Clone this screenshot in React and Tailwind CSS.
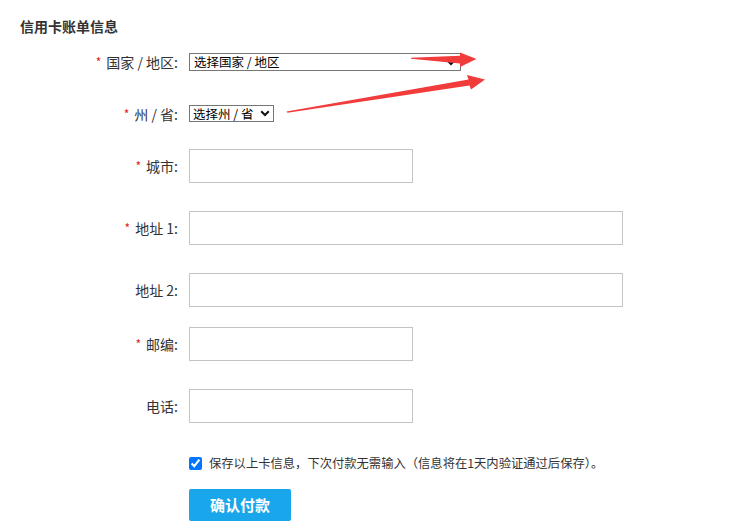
import React from "react";

function Label({ required, children }) {
  return (
    <div className="w-[178px] shrink-0 text-right text-[14px] leading-[20px] text-[#333]">
      {required && <span className="text-[#e02020] text-[12px] mr-[5px] align-[1px]">*</span>}
      {children}
    </div>
  );
}

function Row({ className, required, label, children }) {
  return (
    <div className={"flex items-center gap-[11px] " + className}>
      <Label required={required}>{label}</Label>
      {children}
    </div>
  );
}

function Chevron({ className }) {
  return (
    <svg className={className} width="10" height="7" viewBox="0 0 10 7">
      <path d="M1.2 1.3 L5 5 L8.8 1.3" fill="none" stroke="#111" strokeWidth="2" />
    </svg>
  );
}

export default function App() {
  return (
    <div
      className="relative w-[755px] h-[531px] bg-white overflow-hidden"
      style={{ fontFamily: '"Noto Sans CJK SC", "Liberation Sans", sans-serif' }}
    >
      <div className="pl-[20px] pt-[16px] text-[14px] leading-[20px] font-bold text-[#333]">
        信用卡账单信息
      </div>

      <Row className="mt-[17px] h-[18px]" required label="国家 / 地区:">
        <div className="relative w-[272px] h-[18px]">
          <select className="block appearance-none w-full h-full border border-[#767676] text-[12.5px] leading-[16px] text-black pl-[4px] py-0 bg-white">
            <option>选择国家 / 地区</option>
          </select>
          <Chevron className="absolute right-[5px] top-[6px] pointer-events-none" />
        </div>
      </Row>

      <Row className="mt-[34px] h-[17px]" required label="州 / 省:">
        <div className="relative w-[85px] h-[17px]">
          <select className="block appearance-none w-full h-full border border-[#767676] text-[12.5px] leading-[15px] text-black pl-[3px] py-0 bg-white">
            <option>选择州 / 省</option>
          </select>
          <Chevron className="absolute right-[4px] top-[5px] pointer-events-none" />
        </div>
      </Row>

      <Row className="mt-[27px] h-[34px]" required label="城市:">
        <input className="w-[224px] h-[34px] border border-[#c4c4c4] bg-white" />
      </Row>

      <Row className="mt-[28px] h-[34px]" required label="地址 1:">
        <input className="w-[434px] h-[34px] border border-[#c4c4c4] bg-white" />
      </Row>

      <Row className="mt-[28px] h-[34px]" label="地址 2:">
        <input className="w-[434px] h-[34px] border border-[#c4c4c4] bg-white" />
      </Row>

      <Row className="mt-[20px] h-[34px]" required label="邮编:">
        <input className="w-[224px] h-[34px] border border-[#c4c4c4] bg-white" />
      </Row>

      <Row className="mt-[28px] h-[34px]" label="电话:">
        <input className="w-[224px] h-[34px] border border-[#c4c4c4] bg-white" />
      </Row>

      <div className="mt-[30px] h-[20px] pl-[189px] flex items-center gap-[7px]">
        <input type="checkbox" defaultChecked className="w-[13px] h-[13px] m-0 accent-[#0075ff]" />
        <span className="text-[12.3px] leading-[20px] text-[#333]">
          保存以上卡信息，下次付款无需输入（信息将在1天内验证通过后保存）。
        </span>
      </div>

      <div className="mt-[16px] pl-[189px]">
        <button className="w-[102px] h-[32px] rounded-[2px] bg-[#1aa6ea] text-white text-[15px] font-bold leading-[32px]">
          确认付款
        </button>
      </div>

      <svg
        className="absolute left-0 top-0 pointer-events-none"
        width="755"
        height="531"
        viewBox="0 0 755 531"
      >
        <polygon
          points="411,57.8 460,55.8 460,52.5 476.5,59 460,67 460,63.5 411,58.8"
          fill="#f23c3c"
        />
        <polygon
          points="286.5,111.5 468.5,79.5 467,75 485,79.5 471,89.5 469.5,85.5 287.5,112.8"
          fill="#f23c3c"
        />
      </svg>
    </div>
  );
}
